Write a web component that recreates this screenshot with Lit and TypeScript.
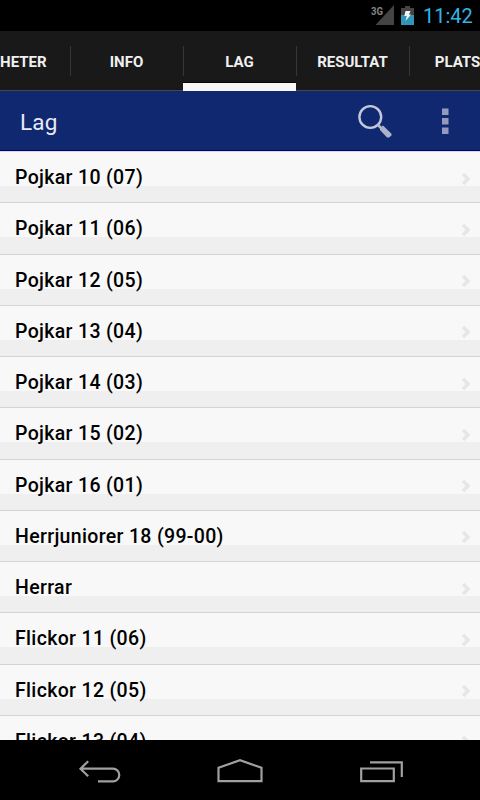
import { LitElement, html, svg, css } from "lit";
import { customElement } from "lit/decorators.js";
import { classMap } from "lit/directives/class-map.js";

const TABS = ["NYHETER", "INFO", "LAG", "RESULTAT", "PLATSER"];
const TEAMS = [
  "Pojkar 10 (07)", "Pojkar 11 (06)", "Pojkar 12 (05)", "Pojkar 13 (04)",
  "Pojkar 14 (03)", "Pojkar 15 (02)", "Pojkar 16 (01)", "Herrjuniorer 18 (99-00)",
  "Herrar", "Flickor 11 (06)", "Flickor 12 (05)", "Flickor 13 (04)",
];

@customElement("status-bar")
class StatusBar extends LitElement {
  static styles = css`
    :host { display: flex; flex: none; height: 31px; background: #000; justify-content: flex-end; }
    .signal { width: 64px; height: 31px; }
    .net { font: 700 10px Roboto, sans-serif; fill: #858585; }
    .clock { width: 57px; font: 400 20px/32px Roboto, sans-serif; color: #33b5e5; white-space: nowrap; }
  `;
  render() {
    return html`
      <svg class="signal" viewBox="359 0 64 31">
        <text class="net" x="371" y="14.5" textLength="12" lengthAdjust="spacingAndGlyphs">3G</text>
        <path d="M394 5V25H375.500Z" fill="#444" />
        <path d="M405 6h5v2h4v7h-13V8h4z" fill="#444" />
        <path d="M401 15h13v10h-13z" fill="#3096b8" />
        <path d="M405.500 11h5l-1.500 3.500h2l-5.500 6.500 1.300-5h-2.500z" fill="#f4f4f4" />
      </svg>
      <div class="clock">11:42</div>
    `;
  }
}

@customElement("tab-strip")
class TabStrip extends LitElement {
  static styles = css`
    :host { display: flex; flex: none; justify-content: center; height: 60px; overflow: hidden;
      background: linear-gradient(#191919 0 59px, #4a4743 59px); }
    .tabs { display: flex; flex: none; width: 565px; height: 60px; margin-left: 1px; }
    .tab { width: 113px; height: 60px; flex: none; display: flex; flex-direction: column;
      align-items: center; font: 700 15px/62px Roboto, sans-serif; color: #f0f0f0;
      background: linear-gradient(#363636, #363636) right 0 top 15px / 1px 30px no-repeat; }
    .label { height: 51px; margin-right: 2px; }
    .tab:last-child .label { margin-right: 0; }
    .bar { width: 113px; height: 8px; flex: none; align-self: flex-start; margin-left: -1px;
      border-top: 1px solid transparent; background-clip: padding-box; }
    .active .bar { background-color: #f8f8f8; border-top-color: #080808; }
  `;
  render() {
    return html`<div class="tabs">${TABS.map((t) => html`
      <div class=${classMap({ tab: true, active: t === "LAG" })}>
        <div class="label">${t}</div><div class="bar"></div>
      </div>`)}</div>`;
  }
}

@customElement("title-bar")
class TitleBar extends LitElement {
  static styles = css`
    :host { display: flex; flex: none; height: 60px; box-sizing: border-box; background: #10286f;
      border-bottom: 1px solid #000070; justify-content: space-between; }
    .title { padding-left: 20px; font: 400 22.500px/63px Roboto, sans-serif; letter-spacing: 0.250px; color: #e8ebf3; }
    .actions { width: 130px; height: 59px; }
  `;
  render() {
    return html`
      <div class="title">Lag</div>
      <svg class="actions" viewBox="350 91 130 59">
        <circle cx="370.300" cy="117" r="10.900" fill="none" stroke="#c3c8da" stroke-width="2.400" />
        <path d="M377.500 124.500l4 4" stroke="#b4bad1" stroke-width="2.500" />
        <path d="M380 128l3-2.500 8.500 8.300v1.800l-2.500 2h-2l-7-7.500z" fill="#aab1cb" />
        <path d="M442 108.500h6.500v6.500h-6.500zM442 118h6.500v6.500h-6.500zM442 127.500h6.500v6.500h-6.500z" fill="#9599bd" />
      </svg>
    `;
  }
}

@customElement("team-list")
class TeamList extends LitElement {
  static styles = css`
    :host { display: block; flex: 1; min-height: 0; overflow: hidden; background: #f8f8f8; border-top: 1px solid #d8d8dc; }
    .row { display: flex; justify-content: space-between; height: 51.250px; box-sizing: border-box; padding: 0 9px 0 15px;
      border-bottom: 1px solid #d4d4d4; background: linear-gradient(#f8f8f8 0 34px, #efefef 34px); }
    .name { height: 50px; font: 500 19.500px/52px Roboto, sans-serif; letter-spacing: 0.330px; color: #000; white-space: nowrap; }
    .chevron { width: 10px; height: 14px; margin-top: 19.500px; }
  `;
  render() {
    return TEAMS.map((name) => html`
      <div class="row">
        <span class="name">${name}</span>
        <svg class="chevron" viewBox="0 0 10 14"><path d="M2 2l5 5-5 5" fill="none" stroke="#e6e6e9" stroke-width="3.500" /></svg>
      </div>`);
  }
}

@customElement("nav-bar")
class NavBar extends LitElement {
  static styles = css`
    :host { display: block; flex: none; height: 60px; background: #000; }
    .icons { display: block; width: 480px; height: 60px; }
  `;
  render() {
    return html`<svg class="icons" viewBox="0 740 480 60">
      ${svg`<g fill="none" stroke="#a0a0a0" stroke-width="2.200">
        <path d="M80.500 768.700H113a6.300 6.300 0 0 1 0 12.600H98M88.200 761.200L80.500 768.700l7.700 7.500" />
        <path d="M218.500 781.200V767.800L240 760.200l21.500 7.600v13.400z" />
        <path d="M361.200 768.500h32.600v12.700h-32.600zM370 762.300h31.800V777" />
      </g>`}
    </svg>`;
  }
}

@customElement("app-root")
class AppRoot extends LitElement {
  static styles = css`
    :host { display: flex; flex-direction: column; width: 480px; height: 800px; overflow: hidden; background: #000; }
  `;
  render() {
    return html`<status-bar></status-bar><tab-strip></tab-strip><title-bar></title-bar>
      <team-list></team-list><nav-bar></nav-bar>`;
  }
}
